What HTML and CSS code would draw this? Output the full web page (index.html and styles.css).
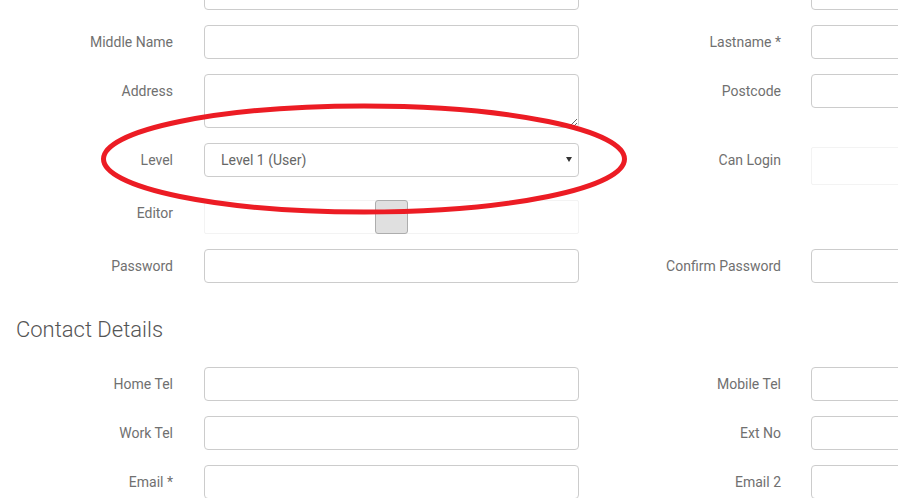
FILE: index.html
```html
<!DOCTYPE html>
<html lang="en">
<head>
<meta charset="utf-8">
<title>User Details</title>
<link rel="stylesheet" href="styles.css">
</head>
<body>
<main class="form">
  <div class="row">
    <div class="field"><label class="label"></label><input class="input" type="text"></div>
    <div class="field"><label class="label"></label><input class="input" type="text"></div>
  </div>
  <div class="row">
    <div class="field"><label class="label">Middle Name</label><input class="input" type="text"></div>
    <div class="field"><label class="label">Lastname *</label><input class="input" type="text"></div>
  </div>
  <div class="row">
    <div class="field"><label class="label">Address</label><textarea class="input textarea"></textarea></div>
    <div class="field"><label class="label">Postcode</label><input class="input" type="text"></div>
  </div>
  <div class="row">
    <div class="field">
      <label class="label">Level</label>
      <div class="select-wrap">
        <select class="input select"><option>Level 1 (User)</option></select>
        <span class="caret"></span>
      </div>
    </div>
    <div class="field"><label class="label">Can Login</label><div class="toggle toggle--login"></div></div>
  </div>
  <div class="row">
    <div class="field"><label class="label label--toggle">Editor</label><div class="toggle"><span class="handle"></span></div></div>
  </div>
  <div class="row">
    <div class="field"><label class="label">Password</label><input class="input" type="password"></div>
    <div class="field"><label class="label">Confirm Password</label><input class="input" type="password"></div>
  </div>

  <h3 class="section-title">Contact Details</h3>

  <div class="row">
    <div class="field"><label class="label">Home Tel</label><input class="input" type="text"></div>
    <div class="field"><label class="label">Mobile Tel</label><input class="input" type="text"></div>
  </div>
  <div class="row">
    <div class="field"><label class="label">Work Tel</label><input class="input" type="text"></div>
    <div class="field"><label class="label">Ext No</label><input class="input" type="text"></div>
  </div>
  <div class="row">
    <div class="field"><label class="label">Email *</label><input class="input" type="text"></div>
    <div class="field"><label class="label">Email 2</label><input class="input" type="text"></div>
  </div>
</main>
<svg class="annotation" width="898" height="498" viewBox="0 0 898 498">
  <ellipse cx="364" cy="159" rx="260.5" ry="53" fill="none" stroke="#ec1c24" stroke-width="5"/>
</svg>
</body>
</html>
```
FILE: styles.css
```css
html, body {
  margin: 0;
  padding: 0;
  background: #fff;
  overflow: hidden;
  width: 898px;
  height: 498px;
}
body {
  font-family: Roboto, "Liberation Sans", sans-serif;
  font-size: 14px;
  color: #555;
  position: relative;
}
.form {
  margin-top: -24px;
  width: 1300px;
}
.row {
  display: grid;
  grid-template-columns: 579px 579px;
  column-gap: 29px;
  margin-bottom: 15px;
}
.field {
  display: grid;
  grid-template-columns: 173px 375px;
  column-gap: 31px;
  align-items: start;
}
.row .field + .field {
  column-gap: 30px;
}
.label {
  text-align: right;
  padding-top: 7px;
  line-height: 20px;
  color: #707070;
  font-size: 14px;
  min-height: 20px;
}
.label--toggle {
  padding-top: 3px;
}
.input {
  display: block;
  width: 100%;
  height: 34px;
  box-sizing: border-box;
  border: 1px solid #ccc;
  border-radius: 4px;
  background: #fff;
  font-family: inherit;
  font-size: 14px;
  color: #666;
  padding: 6px 12px;
  margin: 0;
}
.textarea {
  height: 54px;
  resize: vertical;
}
.select-wrap {
  position: relative;
}
.select {
  appearance: none;
  -webkit-appearance: none;
  padding-left: 16px;
  color: #666;
}
.caret {
  position: absolute;
  right: 7px;
  top: 14px;
  width: 0;
  height: 0;
  border-left: 3px solid transparent;
  border-right: 3px solid transparent;
  border-top: 5px solid #333;
}
.toggle {
  height: 34px;
  box-sizing: border-box;
  border: 1px solid #f3f3f3;
  border-radius: 2px;
  display: flex;
  justify-content: center;
}
.toggle--login {
  margin-top: 4px;
  height: 38px;
}
.handle {
  width: 33px;
  box-sizing: border-box;
  border: 1px solid #adadad;
  border-radius: 3px;
  background: #e0e0e0;
  margin: -1px 0;
}
.section-title {
  margin: 35px 0 25px;
  padding-left: 16px;
  font-size: 22px;
  line-height: 24px;
  font-weight: 300;
  color: #555;
}
.annotation {
  position: absolute;
  left: 0;
  top: 0;
  pointer-events: none;
}
```
